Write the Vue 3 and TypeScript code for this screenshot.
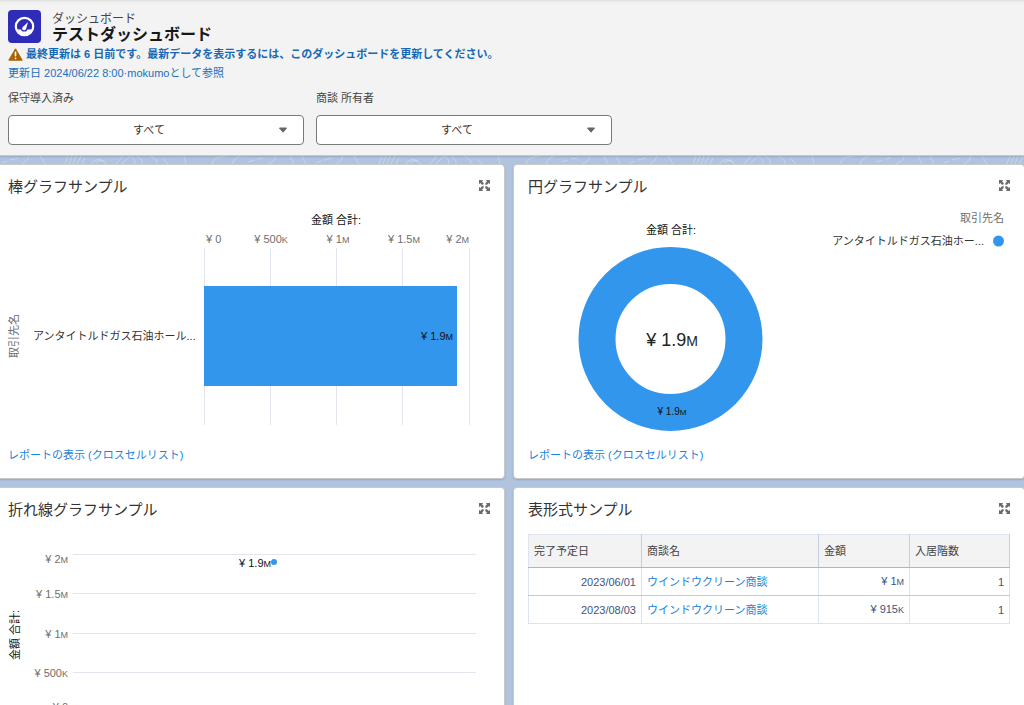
<script setup lang="ts">
interface Amount {
  value: string
  unit: string
}

interface Tick extends Amount {
  at: number
  label: number
  anchor: 'start' | 'middle' | 'end'
}

interface Deal {
  date: string
  name: string
  amount: Amount
  floors: number
}

const filters = [
  { id: 'filter-maintenance', label: '保守導入済み' },
  { id: 'filter-owner', label: '商談 所有者' },
]

const barTicks: Tick[] = [
  { value: '¥ 0', unit: '', at: 196, label: 198, anchor: 'start' },
  { value: '¥ 500', unit: 'K', at: 262, label: 263, anchor: 'middle' },
  { value: '¥ 1', unit: 'M', at: 328, label: 330, anchor: 'middle' },
  { value: '¥ 1.5', unit: 'M', at: 394, label: 396, anchor: 'middle' },
  { value: '¥ 2', unit: 'M', at: 461, label: 461, anchor: 'end' },
]

const lineTicks = [
  { value: '¥ 2', unit: 'M', at: 32, label: 40 },
  { value: '¥ 1.5', unit: 'M', at: 71, label: 75 },
  { value: '¥ 1', unit: 'M', at: 111, label: 115 },
  { value: '¥ 500', unit: 'K', at: 150, label: 154 },
  { value: '¥ 0', unit: '', at: 190, label: 188 },
]

const columns = ['完了予定日', '商談名', '金額', '入居階数']

const deals: Deal[] = [
  { date: '2023/06/01', name: 'ウインドウクリーン商談', amount: { value: '¥ 1', unit: 'M' }, floors: 1 },
  { date: '2023/08/03', name: 'ウインドウクリーン商談', amount: { value: '¥ 915', unit: 'K' }, floors: 1 },
]

const expandPath =
  'M0 0h4.2L3 1.2 4.8 3 4.2 4.8 3 4.8 1.2 3 0 4.2zM11 0v4.2L9.8 3 8 4.8 6.2 4.8 6.4 3 8 1.2 6.8 0zM0 11V6.8L1.2 8 3 6.2 4.8 6.2 4.6 8 3 9.8 4.2 11zM11 11H6.8L8 9.8 6.2 8 6.4 6.2 8 6.2 9.8 8 11 6.8z'
</script>

<template>
  <div class="page">
    <header class="header">
      <div class="heading">
        <svg class="logo" viewBox="0 0 33 33" aria-hidden="true">
          <rect width="33" height="33" rx="4" fill="#2f2cb7" />
          <circle cx="16.5" cy="16.5" r="8.7" fill="none" stroke="#fff" stroke-width="2.2" />
          <path d="M9 19.6h15a8 8 0 0 1-15 0z" fill="#fff" />
          <circle cx="16.2" cy="18.4" r="3.2" fill="#2f2cb7" />
          <circle cx="16.1" cy="18.4" r="1.9" fill="#fff" />
          <path d="M14.6 17.3l5.4-5.2-2 7.2z" fill="#fff" />
        </svg>
        <div class="names">
          <p class="kind">ダッシュボード</p>
          <h1 class="name">テストダッシュボード</h1>
        </div>
      </div>
      <p class="warning">
        <svg class="warning-icon" viewBox="0 0 15 13" aria-hidden="true">
          <path d="M7.5.8 14.2 12.2H.8z" fill="#a86403" stroke="#a86403" stroke-linejoin="round" />
          <path d="M7.5 4.4v3.4" stroke="#fff" stroke-width="1.6" stroke-linecap="round" />
          <circle cx="7.5" cy="10.3" r="0.9" fill="#fff" />
        </svg>
        <span>最終更新は 6 日前です。最新データを表示するには、このダッシュボードを更新してください。</span>
      </p>
      <p class="meta">更新日 2024/06/22 8:00·mokumoとして参照</p>
      <div class="filters">
        <div v-for="filter in filters" :key="filter.id" class="filter">
          <label class="filter-label" :for="filter.id">{{ filter.label }}</label>
          <div class="picker">
            <select :id="filter.id" class="select">
              <option>すべて</option>
            </select>
            <svg class="arrow" viewBox="0 0 10 6" aria-hidden="true">
              <path d="M1.5 1h7L5 5.2z" fill="#666" stroke="#666" stroke-linejoin="round" />
            </svg>
          </div>
        </div>
      </div>
    </header>

    <main class="board">
      <svg class="contours" width="1024" height="8" viewBox="0 0 1024 8" aria-hidden="true">
        <defs>
          <pattern id="contour-lines" width="314" height="8" patternUnits="userSpaceOnUse">
            <path
              d="M2 7l5-2M10 4l8-2M22 8q6-3 7-8M40 0l5 8M65 8l3-8M69 8l3-8M73 8l3-8M77 8l4-8M82 8l3-6M91 8q8-9 16 0M96 7q4-4 8-1M116 8l7-8M122 8l8-8M131 0q5 4 4 8M137 0q6 4 5 8M150 0q8 4 7 8M163 3l5 5M186 8l-2-8M212 8q2-8 14-8M232 8q2-6 9-8M248 6l6-2M257 3l6-1M268 8q8-3 8-8M290 0l4 8M302 0l4 8"
              fill="none"
              stroke="#d5e1f0"
              stroke-opacity="0.6"
            />
          </pattern>
        </defs>
        <rect width="1024" height="8" fill="url(#contour-lines)" />
      </svg>

      <section class="card">
        <div class="card-head">
          <h2 class="card-title">棒グラフサンプル</h2>
          <button class="expand" type="button" aria-label="展開">
            <svg viewBox="0 0 11 11"><path :d="expandPath" /></svg>
          </button>
        </div>
        <svg class="chart" viewBox="0 0 482 247">
          <text class="strong" x="328" y="24" text-anchor="middle">金額 合計:</text>
          <g v-for="tick in barTicks" :key="tick.at">
            <line class="grid" :x1="tick.at + 0.5" :x2="tick.at + 0.5" y1="48" y2="225" />
            <text class="tick" :x="tick.label" y="43" :text-anchor="tick.anchor">{{ tick.value }}<tspan class="unit">{{ tick.unit }}</tspan></text>
          </g>
          <rect class="fill" x="196" y="86" width="253" height="100" />
          <text class="strong" x="445" y="140" text-anchor="end">¥ 1.9<tspan class="unit">M</tspan></text>
          <text class="category" x="25" y="140">アンタイトルドガス石油ホール...</text>
          <text class="tick" transform="translate(10 136) rotate(-90)" text-anchor="middle">取引先名</text>
        </svg>
        <a class="report" href="#">レポートの表示 (クロスセルリスト)</a>
      </section>

      <section class="card">
        <div class="card-head">
          <h2 class="card-title">円グラフサンプル</h2>
          <button class="expand" type="button" aria-label="展開">
            <svg viewBox="0 0 11 11"><path :d="expandPath" /></svg>
          </button>
        </div>
        <svg class="chart" viewBox="0 0 482 247">
          <text class="strong" x="143" y="34" text-anchor="middle">金額 合計:</text>
          <circle class="ring" cx="142.5" cy="139" r="73.5" />
          <text class="total" x="144" y="146" text-anchor="middle">¥ 1.9<tspan class="total-unit">M</tspan></text>
          <text class="slice" x="144" y="215" text-anchor="middle">¥ 1.9<tspan class="slice-unit">M</tspan></text>
          <text class="tick" x="476" y="22" text-anchor="end">取引先名</text>
          <text class="category" x="456" y="45" text-anchor="end">アンタイトルドガス石油ホー...</text>
          <circle class="fill" cx="470.5" cy="41" r="5.5" />
        </svg>
        <a class="report" href="#">レポートの表示 (クロスセルリスト)</a>
      </section>

      <section class="card">
        <div class="card-head">
          <h2 class="card-title">折れ線グラフサンプル</h2>
          <button class="expand" type="button" aria-label="展開">
            <svg viewBox="0 0 11 11"><path :d="expandPath" /></svg>
          </button>
        </div>
        <svg class="chart" viewBox="0 0 482 247">
          <g v-for="tick in lineTicks" :key="tick.at">
            <line class="grid" x1="65" x2="468" :y1="tick.at - 0.5" :y2="tick.at - 0.5" />
            <text class="tick" x="60" :y="tick.label" text-anchor="end">{{ tick.value }}<tspan class="unit">{{ tick.unit }}</tspan></text>
          </g>
          <text class="strong" transform="translate(11 112) rotate(-90)" text-anchor="middle">金額 合計:</text>
          <text class="strong" x="263" y="44" text-anchor="end">¥ 1.9<tspan class="unit">M</tspan></text>
          <circle class="fill" cx="266" cy="39" r="3" />
        </svg>
      </section>

      <section class="card">
        <div class="card-head">
          <h2 class="card-title">表形式サンプル</h2>
          <button class="expand" type="button" aria-label="展開">
            <svg viewBox="0 0 11 11"><path :d="expandPath" /></svg>
          </button>
        </div>
        <table class="table">
          <colgroup>
            <col class="col-date" />
            <col class="col-name" />
            <col class="col-amount" />
            <col />
          </colgroup>
          <thead>
            <tr>
              <th v-for="column in columns" :key="column" scope="col">{{ column }}</th>
            </tr>
          </thead>
          <tbody>
            <tr v-for="deal in deals" :key="deal.date">
              <td class="number">{{ deal.date }}</td>
              <td><a class="deal" href="#">{{ deal.name }}</a></td>
              <td class="number">{{ deal.amount.value }}<span class="unit">{{ deal.amount.unit }}</span></td>
              <td class="number">{{ deal.floors }}</td>
            </tr>
          </tbody>
        </table>
      </section>
    </main>
  </div>
</template>

<style>
body {
  margin: 0;
  background: #b0c4df;
}
</style>

<style scoped>
.page {
  display: flex;
  flex-direction: column;
  height: 100vh;
  overflow: hidden;
  background: #b0c4df;
  color: #444;
  font-family: "Liberation Sans", "Noto Sans CJK JP", sans-serif;
  font-size: 11px;
  line-height: 16px;
}

p,
h1,
h2 {
  margin: 0;
}

.header {
  flex: none;
  position: relative;
  z-index: 1;
  padding: 10px 8px;
  background: #f3f3f3;
  border-bottom: 1px solid #c4c8ce;
  box-shadow: 0 1px 2px rgba(0, 0, 0, 0.15), inset 0 3px 3px -2px rgba(0, 0, 0, 0.1);
}

.heading {
  display: flex;
  gap: 11px;
}

.logo {
  width: 33px;
  height: 33px;
}

.kind {
  padding-top: 2px;
  font-size: 12px;
  line-height: 14px;
}

.name {
  color: #181818;
  font-size: 16px;
  font-weight: 700;
  line-height: 17px;
}

.warning {
  display: flex;
  align-items: center;
  gap: 3px;
  padding-top: 3px;
  color: #1668b4;
  font-weight: 700;
}

.warning-icon {
  flex: none;
  width: 15px;
  height: 13px;
}

.meta {
  padding-top: 3px;
  color: #1f6fb8;
}

.filters {
  display: grid;
  grid-template-columns: repeat(2, minmax(0, 296px));
  gap: 12px;
  padding-top: 9px;
}

.filter-label {
  display: block;
  padding-bottom: 9px;
}

.picker {
  display: grid;
  align-items: center;
}

.select {
  grid-area: 1 / 1;
  width: 100%;
  height: 30px;
  padding: 0 28px 0 14px;
  appearance: none;
  background: #fff;
  border: 1px solid #7a7a7a;
  border-radius: 4px;
  color: #333;
  font: inherit;
  text-align: center;
  text-align-last: center;
}

.arrow {
  grid-area: 1 / 1;
  justify-self: end;
  width: 10px;
  height: 6px;
  margin-right: 16px;
  pointer-events: none;
}

.board {
  position: relative;
  display: grid;
  grid-template-columns: repeat(2, minmax(0, 1fr));
  gap: 8px;
  margin: 0 -1px 0 -7px;
  padding-top: 8px;
}

.contours {
  position: absolute;
  top: 0;
  left: 7px;
}

.card {
  padding: 11px 14px 15px;
  background: #fff;
  border: 1px solid #c9c9c9;
  border-radius: 4px;
  box-shadow: 0 1px 2px rgba(0, 0, 0, 0.15);
}

.card-head {
  display: flex;
  justify-content: space-between;
  height: 24px;
}

.card-title {
  color: #333;
  font-size: 15px;
  font-weight: 400;
  line-height: 22px;
}

.expand {
  width: 11px;
  height: 19px;
  padding: 0;
  background: none;
  border: 0;
}

.expand svg {
  display: block;
  width: 11px;
  height: 11px;
  fill: #6b6b6b;
}

.chart {
  display: block;
  width: 100%;
  overflow: visible;
}

.grid {
  stroke: #e0e5ee;
}

.fill {
  fill: #3296ed;
}

.ring {
  fill: none;
  stroke: #3296ed;
  stroke-width: 37px;
}

.tick {
  fill: #706e6b;
}

.strong {
  fill: #111;
}

.category {
  fill: #333;
}

.unit {
  font-size: 9px;
}

.slice {
  fill: #111;
  font-size: 10px;
}

.slice-unit {
  font-size: 8px;
}

.total {
  fill: #222;
  font-size: 18px;
}

.total-unit {
  font-size: 14px;
}

.report,
.deal {
  color: #1b83d8;
  text-decoration: none;
}

.report {
  display: block;
}

.table {
  width: 100%;
  margin-top: 11px;
  table-layout: fixed;
  border-collapse: collapse;
}

.col-date {
  width: 113px;
}

.col-name {
  width: 177px;
}

.col-amount {
  width: 91px;
}

.table th,
.table td {
  padding: 5px;
  border: 1px solid #dde4f0;
  text-align: left;
}

.table th {
  padding: 8px 5px;
  background: #f3f3f3;
  border-bottom-color: #b5b5b5;
  border-right-color: #c3d0e2;
  font-weight: 400;
}

.table td {
  border-bottom-color: #c9c9c9;
}

.table tr:last-child td {
  border-bottom-color: #dde4f0;
}

.table .number {
  color: #3d557f;
  text-align: right;
}
</style>
